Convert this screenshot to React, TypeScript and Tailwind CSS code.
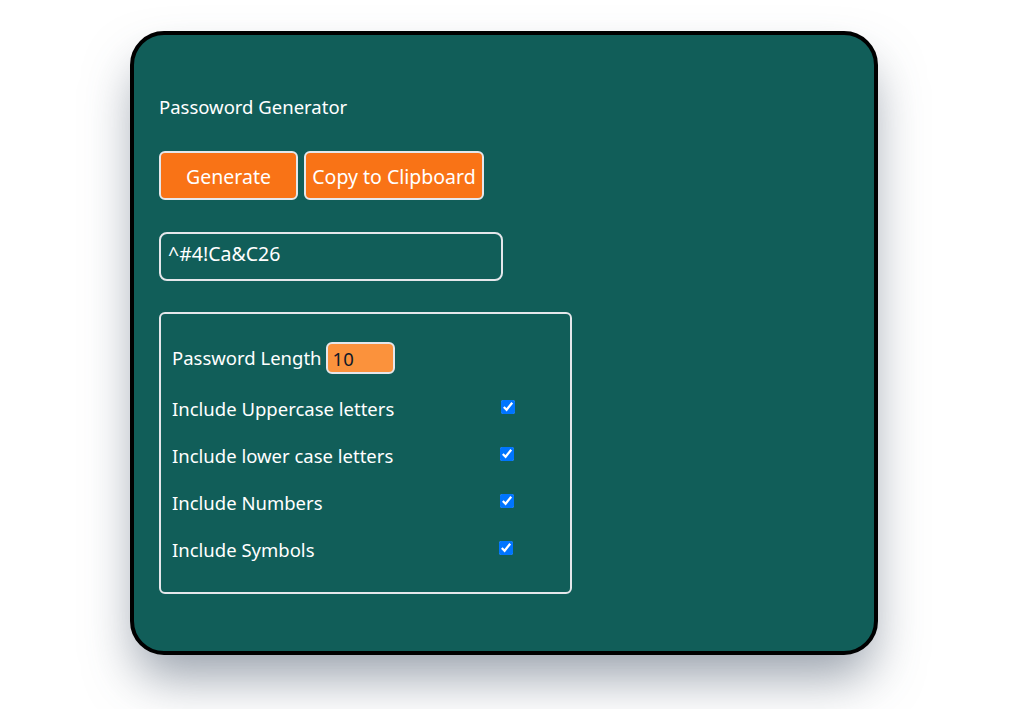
import React, { useState } from "react";

const options = [
  { label: "Include Uppercase letters", offset: "ml-[2px]" },
  { label: "Include lower case letters", offset: "ml-[1px]" },
  { label: "Include Numbers", offset: "ml-[1px]" },
  { label: "Include Symbols", offset: "ml-0" },
];

export default function App() {
  const [length, setLength] = useState("10");

  return (
    <div className="min-h-screen bg-white pt-[31px] pl-[130px] font-['Noto_Sans',sans-serif]">
      <div className="w-[748px] h-[624px] rounded-[34px] border-4 border-black bg-[#115e59] pl-[25px] pt-[58px] text-[18.5px] text-white shadow-[0_28px_50px_-6px_rgba(71,85,105,0.55)]">
        <h1 className="leading-[28px]">Passoword Generator</h1>

        <div className="mt-[30px] flex gap-[6px]">
          <button className="h-[49px] w-[139px] rounded-md border-2 border-gray-200 bg-[#f97316] pt-[3px] text-[19.5px] text-white">
            Generate
          </button>
          <button className="h-[49px] w-[180px] rounded-md border-2 border-gray-200 bg-[#f97316] pt-[3px] text-[19.5px] text-white">
            Copy to Clipboard
          </button>
        </div>

        <div className="mt-[32px] flex h-[49px] w-[344px] items-start rounded-lg border-2 border-gray-200 pl-[7px] pt-[8px] text-[19.5px] leading-[24px]">
          ^#4!Ca&amp;C26
        </div>

        <div className="mt-[31px] h-[282px] w-[413px] rounded-md border-2 border-gray-200 pl-[11px] pt-[28px]">
          <div className="flex items-center gap-[4px]">
            <span>Password Length</span>
            <input
              value={length}
              onChange={(e) => setLength(e.target.value)}
              className="h-[32px] w-[69px] rounded-md border-2 border-gray-200 bg-[#fb923c] px-[5px] text-[18.5px] text-gray-900 outline-none"
            />
          </div>

          <div className="mt-[21px] flex flex-col gap-[19px]">
            {options.map((o) => (
              <div key={o.label} className="flex h-[28px] items-center">
                <span className="w-[327px]">{o.label}</span>
                <input
                  type="checkbox"
                  defaultChecked
                  className={`h-[14px] w-[14px] -translate-y-[2px] ${o.offset}`}
                />
              </div>
            ))}
          </div>
        </div>
      </div>
    </div>
  );
}
